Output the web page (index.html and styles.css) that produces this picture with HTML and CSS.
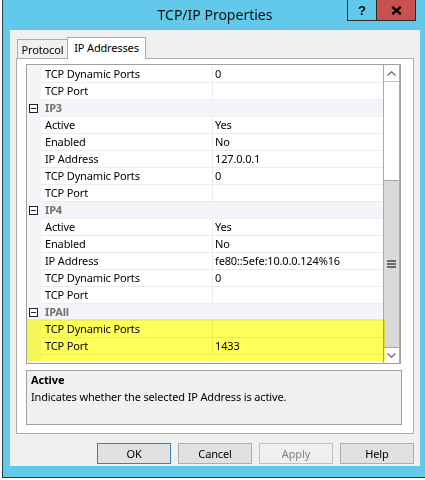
FILE: index.html
```html
<!DOCTYPE html>
<html>
<head>
<meta charset="utf-8">
<title>TCP/IP Properties</title>
<link rel="stylesheet" href="styles.css">
</head>
<body>
<div class="window">
  <div class="titlebar">
    <div class="title">TCP/IP Properties</div>
    <div class="caption">
      <div class="cap-help">?</div>
      <div class="cap-close">
        <svg width="11" height="9" viewBox="0 0 11 9"><path d="M1.2 0.8 L9.8 8.2 M9.8 0.8 L1.2 8.2" stroke="#000" stroke-width="2.3" fill="none"/></svg>
      </div>
    </div>
  </div>
  <div class="client">
    <div class="tabs">
      <div class="tab">Protocol</div>
      <div class="tab active">IP Addresses</div>
    </div>
    <div class="panel">
      <div class="pgrid">
        <div class="rows">
          <div class="row"><div class="g"></div><div class="n">TCP Dynamic Ports</div><div class="v">0</div></div>
          <div class="row"><div class="g"></div><div class="n">TCP Port</div><div class="v"></div></div>
          <div class="row cat"><div class="g"><span class="minus"></span></div><div class="n">IP3</div></div>
          <div class="row"><div class="g"></div><div class="n">Active</div><div class="v">Yes</div></div>
          <div class="row"><div class="g"></div><div class="n">Enabled</div><div class="v">No</div></div>
          <div class="row"><div class="g"></div><div class="n">IP Address</div><div class="v">127.0.0.1</div></div>
          <div class="row"><div class="g"></div><div class="n">TCP Dynamic Ports</div><div class="v">0</div></div>
          <div class="row"><div class="g"></div><div class="n">TCP Port</div><div class="v"></div></div>
          <div class="row cat"><div class="g"><span class="minus"></span></div><div class="n">IP4</div></div>
          <div class="row"><div class="g"></div><div class="n">Active</div><div class="v">Yes</div></div>
          <div class="row"><div class="g"></div><div class="n">Enabled</div><div class="v">No</div></div>
          <div class="row"><div class="g"></div><div class="n">IP Address</div><div class="v">fe80::5efe:10.0.0.124%16</div></div>
          <div class="row"><div class="g"></div><div class="n">TCP Dynamic Ports</div><div class="v">0</div></div>
          <div class="row"><div class="g"></div><div class="n">TCP Port</div><div class="v"></div></div>
          <div class="row cat"><div class="g"><span class="minus"></span></div><div class="n">IPAll</div></div>
          <div class="row"><div class="g"></div><div class="n">TCP Dynamic Ports</div><div class="v"></div></div>
          <div class="row"><div class="g"></div><div class="n">TCP Port</div><div class="v">1433</div></div>
          <div class="highlight"></div>
        </div>
        <div class="vscroll">
          <div class="sb-up"><svg width="9" height="5" viewBox="0 0 9 5"><path d="M0.5 4.5 L4.5 0.8 L8.5 4.5" stroke="#606060" stroke-width="1.1" fill="none"/></svg></div>
          <div class="sb-track">
            <div class="sb-thumb"><svg width="9" height="8" viewBox="0 0 9 8"><rect x="0" y="0" width="9" height="2" fill="#6a6a6a"/><rect x="0" y="3" width="9" height="2" fill="#6a6a6a"/><rect x="0" y="6" width="9" height="2" fill="#6a6a6a"/></svg></div>
          </div>
          <div class="sb-down"><svg width="9" height="5" viewBox="0 0 9 5"><path d="M0.5 0.5 L4.5 4.2 L8.5 0.5" stroke="#606060" stroke-width="1.1" fill="none"/></svg></div>
        </div>
      </div>
      <div class="desc">
        <div class="desc-title">Active</div>
        <div class="desc-text">Indicates whether the selected IP Address is active.</div>
      </div>
    </div>
    <div class="buttons">
      <div class="btn default">OK</div>
      <div class="btn">Cancel</div>
      <div class="btn disabled">Apply</div>
      <div class="btn">Help</div>
    </div>
  </div>
</div>
</body>
</html>
```

FILE: styles.css
```css
* { box-sizing: border-box; }
html, body {
  margin: 0;
  padding: 0;
  background: #ffffff;
  font-family: "Noto Sans", "Open Sans", sans-serif;
  font-size: 11px;
  letter-spacing: -0.15px;
  color: #000;
}
.window {
  margin-left: 2px;
  width: 423px;
  height: 478px;
  background: #62c9ea;
  border-left: 1px solid #2e3a40;
  border-bottom: 1px solid #2e3a40;
  padding: 0 5px 11px 7px;
  display: flex;
  flex-direction: column;
}
.titlebar {
  height: 30px;
  display: grid;
  grid-template-columns: 1fr auto 1fr;
  align-items: center;
}
.title {
  grid-column: 2;
  font-size: 14px;
  letter-spacing: 0;
  color: #111;
  line-height: 30px;
}
.caption {
  grid-column: 3;
  justify-self: end;
  align-self: start;
  margin-right: 4px;
  display: flex;
  height: 21px;
  border: 1px solid #2b2b2b;
  border-top: none;
}
.cap-help {
  width: 28px;
  display: flex;
  align-items: center;
  justify-content: center;
  font-weight: bold;
  font-size: 13px;
  font-family: "Liberation Sans", sans-serif;
}
.cap-close {
  width: 39px;
  border-left: 1px solid #2b2b2b;
  background: #c75050;
  display: flex;
  align-items: center;
  justify-content: center;
}
.client {
  height: 436px;
  background: #f0f0f0;
  padding: 7px 0 0 6px;
  display: flex;
  flex-direction: column;
}
.tabs {
  display: flex;
  align-items: flex-end;
  height: 22px;
  margin: 0 0 -1px 1px;
}
.tab {
  height: 20px;
  width: 50px;
  border: 1px solid #acacac;
  border-bottom: none;
  border-right: none;
  background: #f0f0f0;
  display: flex;
  align-items: center;
  justify-content: center;
  padding-bottom: 1px;
}
.tab.active {
  position: relative;
  z-index: 1;
  height: 22px;
  width: 79px;
  border-right: 1px solid #acacac;
  background: #fff;
  padding-bottom: 3px;
}
.panel {
  width: 398px;
  height: 376px;
  border: 1px solid #acacac;
  background: #fff;
  padding: 5px 11px 8px 9px;
}
.pgrid {
  width: 375px;
  height: 300px;
  border: 1px solid #a0a0a0;
  display: flex;
}
.rows {
  position: relative;
  flex: 1;
  padding-top: 1px;
  background: linear-gradient(to right, #f3f5f9 14px, #fff 14px);
}
.row {
  display: grid;
  grid-template-columns: 14px 172px 1fr;
  height: 17px;
  line-height: 16px;
}
.row .n {
  padding-left: 4px;
  border-right: 1px solid #ececec;
  border-bottom: 1px solid #ececec;
  white-space: nowrap;
}
.row .v {
  padding-left: 2px;
  border-bottom: 1px solid #ececec;
  white-space: nowrap;
}
.row.cat {
  background: #f3f5f9;
}
.row.cat .n {
  grid-column: 2 / 4;
  border-right: none;
  border-bottom: 1px solid #eef0f4;
  font-weight: bold;
  color: #717171;
}
.g {
  display: flex;
  align-items: center;
}
.minus {
  margin-left: 2px;
  width: 9px;
  height: 9px;
  border: 1px solid #222;
  background: #fff;
  position: relative;
  display: block;
}
.minus::after {
  content: "";
  position: absolute;
  left: 1px;
  top: 3px;
  width: 5px;
  height: 1px;
  background: #222;
}
.highlight {
  position: absolute;
  left: 0;
  top: 254px;
  width: 358px;
  height: 42px;
  background: #ffff5a;
  mix-blend-mode: multiply;
}
.vscroll {
  width: 17px;
  border-left: 1px solid #ababab;
  border-right: 1px solid #ababab;
  display: flex;
  flex-direction: column;
  background: #fff;
}
.sb-up {
  height: 17px;
  border-bottom: 1px solid #c2c2c2;
  display: flex;
  align-items: center;
  justify-content: center;
}
.sb-track {
  flex: 1;
  padding-top: 98px;
  display: flex;
  flex-direction: column;
}
.sb-thumb {
  flex: 1;
  background: #dadada;
  border-top: 1px solid #a6a6a6;
  display: flex;
  align-items: center;
  justify-content: center;
}
.sb-down {
  height: 16px;
  border-top: 1px solid #a6a6a6;
  display: flex;
  align-items: center;
  justify-content: center;
}
.desc {
  margin-top: 6px;
  width: 376px;
  height: 55px;
  border: 1px solid #a0a0a0;
  background: #f0f0f0;
  padding: 0 4px;
  line-height: 17px;
}
.desc-title { font-weight: bold; }
.buttons {
  margin-top: 9px;
  margin-right: 6px;
  display: flex;
  justify-content: flex-end;
  gap: 7px;
}
.btn {
  width: 74px;
  height: 21px;
  border: 1px solid #adadad;
  background: #e1e1e1;
  display: flex;
  align-items: center;
  justify-content: center;
}
.btn.default { border-color: #3c7fb1; }
.btn.disabled {
  border-color: #bfbfbf;
  background: #efefef;
  color: #838383;
}
```
